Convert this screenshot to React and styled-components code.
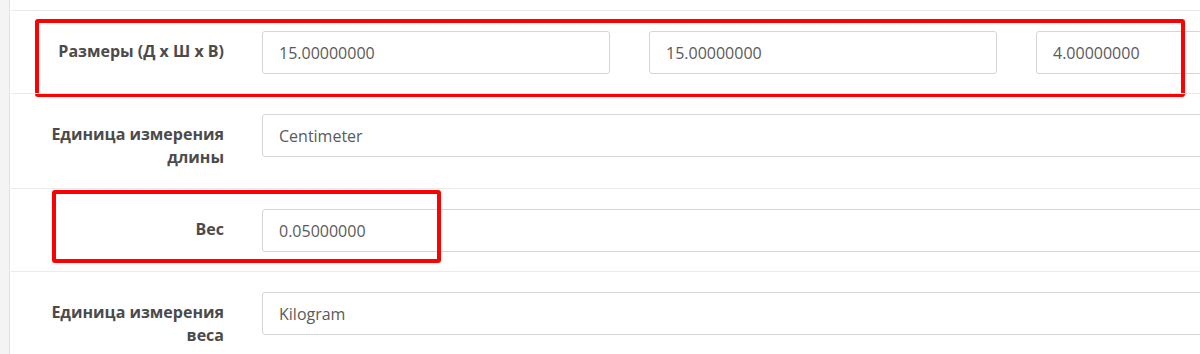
import React from 'react';
import styled, { createGlobalStyle } from 'styled-components';

const GlobalStyle = createGlobalStyle`
	html, body {
		margin: 0;
		padding: 0;
		background: #ffffff;
		font-family: 'Open Sans', 'Noto Sans', sans-serif;
	}
`;

const StyledPage = styled.div`
	display: flex;
	width: 1200px;
	height: 354px;
	overflow: hidden;
	position: relative;
`;

const StyledSidebar = styled.div`
	flex: 0 0 9px;
	background-color: #f4f4f4;
	border-right: 1px solid #e2e2e2;
`;

const StyledForm = styled.div`
	flex: 1;
	padding-top: 10px;
	padding-left: 1px;
	min-width: 0;
`;

const StyledRow = styled.div`
	position: relative;
	display: grid;
	grid-template-columns: 213px 1fr;
	column-gap: 38px;
	align-items: start;
	border-top: 1px solid #ebebeb;
	padding: 20px 0 19px;
`;

const StyledLabel = styled.label`
	padding-top: 9px;
	font-size: 16px;
	font-weight: 700;
	line-height: 23px;
	color: #4b4b4b;
	text-align: right;
`;

const StyledControls = styled.div`
	display: flex;
	gap: 39px;
	min-width: 0;
`;

const StyledInput = styled.div`
	box-sizing: border-box;
	flex: 0 0 ${({ $width }) => $width}px;
	height: 43px;
	padding: 0 16px;
	display: flex;
	align-items: center;
	border: 1px solid #d6d6d6;
	border-radius: 3px;
	background: #fff;
	font-size: 16px;
	color: #5a5a5a;
`;

const StyledHighlight = styled.div`
	position: absolute;
	top: ${({ $top }) => $top}px;
	left: ${({ $left }) => $left}px;
	width: ${({ $width }) => $width}px;
	height: ${({ $height }) => $height}px;
	box-sizing: border-box;
	border: 4px solid #ff0000;
	border-radius: 3px;
	pointer-events: none;
`;

const rows = [
	{
		label: 'Размеры (Д х Ш х В)',
		values: ['15.00000000', '15.00000000', '4.00000000'],
		highlight: { top: 8, left: 24, width: 1150, height: 78 },
	},
	{ label: 'Единица измерения длины', values: ['Centimeter'] },
	{
		label: 'Вес',
		values: ['0.05000000'],
		highlight: { top: 1, left: 41, width: 389, height: 73 },
	},
	{ label: 'Единица измерения веса', values: ['Kilogram'] },
];

const prefix = (h) => ({
	$top: h.top,
	$left: h.left,
	$width: h.width,
	$height: h.height,
});

const App = () => {
	return (
		<>
			<GlobalStyle />
			<StyledPage>
				<StyledSidebar />
				<StyledForm>
					{rows.map((row) => (
						<StyledRow key={row.label}>
							<StyledLabel>{row.label}</StyledLabel>
							<StyledControls>
								{row.values.map((value, i) => (
									<StyledInput
										key={i}
										$width={row.values.length > 1 ? 348 : 1100}
									>
										{value}
									</StyledInput>
								))}
							</StyledControls>
							{row.highlight && <StyledHighlight {...prefix(row.highlight)} />}
						</StyledRow>
					))}
				</StyledForm>
			</StyledPage>
		</>
	);
};

export default App;
